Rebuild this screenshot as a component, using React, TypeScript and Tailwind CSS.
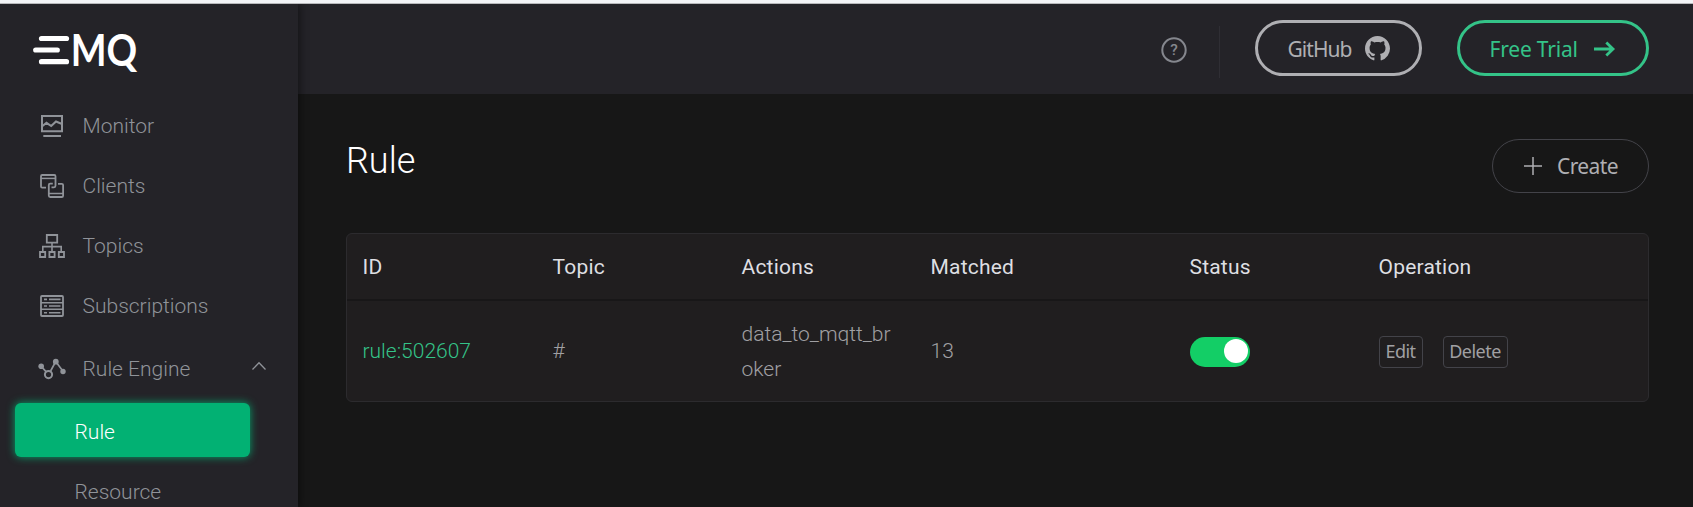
import React from "react";

const ROBOTO = "font-['Roboto',sans-serif]";

function Logo() {
  return (
    <svg className="ml-[32px] mt-[10px] block h-[64px] w-[130px] shrink-0" viewBox="0 -16 130 64" fill="none">
      <g stroke="#fff" strokeWidth="5.2" strokeLinecap="round">
        <path d="M9.5 8.5H34.5" />
        <path d="M3.7 20H25.3" />
        <path d="M9.5 31.7H34.5" />
      </g>
      <text x="38.8" y="35.6" fontSize="43.5" fontWeight="700" fill="#fff" fontFamily="Lato, sans-serif" textLength="66.4" lengthAdjust="spacingAndGlyphs">
        MQ
      </text>
    </svg>
  );
}

function IconBox({ children }: { children: React.ReactNode }) {
  return (
    <svg className="block size-7 shrink-0" viewBox="0 0 28 28" fill="none" stroke="#909399" strokeWidth="1.8">
      {children}
    </svg>
  );
}

const MonitorIcon = () => (
  <IconBox>
    <path d="M4 4H24V19.2H4Z" strokeWidth="2" />
    <path d="M4.5 14L8.500 10.800L13.200 14L18 9.500L24 12" strokeWidth="2.100" />
    <path d="M5.300 24H23" strokeWidth="2" />
  </IconBox>
);

const ClientsIcon = () => (
  <IconBox>
    <path d="M8 15.6H4.2Q3 15.6 3 14.4V4.2Q3 3 4.2 3H16.300Q17.500 3 17.500 4.200V13.800Q17.500 15.300 16 15.300H13.500" />
    <path d="M3 6.400H17.500" strokeWidth="1.500" />
    <path d="M14.800 11.700H12.200Q10.800 11.700 10.800 13V23.600Q10.800 25 12.200 25H23.800Q25.100 25 25.100 23.700V13Q25.100 11.800 23.800 11.800H20" />
    <path d="M10.800 21.500H25" strokeWidth="1.500" />
  </IconBox>
);

const TopicsIcon = () => (
  <IconBox>
    <path d="M8.800 3H19.200V10.600H8.800Z" />
    <path d="M14 10.600V20M4.800 20V14.600H23.200V20" strokeWidth="1.600" />
    <path d="M2 20H7.200V25H2ZM11.400 20H16.600V25H11.400ZM20.800 20H26V25H20.800Z" />
  </IconBox>
);

const SubscriptionsIcon = () => (
  <IconBox>
    <rect x="3" y="4" width="22" height="20" rx="1" />
    <path d="M3 10.700H25M3 17.300H25" strokeWidth="1.500" />
    <path d="M6 7.400H9M11 7.400H22.500M6 14H9M11 14H22.500M6 20.700H9M11 20.700H22.500" strokeWidth="1.600" />
  </IconBox>
);

const RuleEngineIcon = () => (
  <IconBox>
    <path d="M3.200 11.300L8 16.600M12.600 16L17.700 6.500L25.200 16.500" strokeWidth="1.700" />
    <circle cx="10.500" cy="19.600" r="3.600" strokeWidth="2" />
    <g fill="#909399" stroke="none">
      <circle cx="3.200" cy="11.300" r="2.800" />
      <circle cx="17.800" cy="6.700" r="2.900" />
      <circle cx="25" cy="16.500" r="2.700" />
    </g>
  </IconBox>
);

function NavItem({ icon, label, children }: { icon: React.ReactNode; label: string; children?: React.ReactNode }) {
  return (
    <div className="flex h-[60px] shrink-0 items-center pl-[38px] pr-[30px]">
      {icon}
      <span className="ml-[16.500px] flex-1 pt-[2px] text-[21px] font-light text-[#909399]">{label}</span>
      {children}
    </div>
  );
}

function Sidebar() {
  return (
    <aside className="z-10 flex w-[298px] shrink-0 flex-col overflow-hidden bg-[#242328] shadow-[2px_0_8px_rgba(0,0,0,0.45)]">
      <Logo />
      <nav className="mt-[18px] flex flex-col">
        <NavItem icon={<MonitorIcon />} label="Monitor" />
        <NavItem icon={<ClientsIcon />} label="Clients" />
        <NavItem icon={<TopicsIcon />} label="Topics" />
        <NavItem icon={<SubscriptionsIcon />} label="Subscriptions" />
        <div className="h-[3px]" />
        <NavItem icon={<RuleEngineIcon />} label="Rule Engine">
          <svg className="-mt-1.5 block h-[10px] w-[18px]" viewBox="0 0 18 10" fill="none" stroke="#909399" strokeWidth="1.3">
            <path d="M2.500 8.500L9 1.800L15.500 8.500" />
          </svg>
        </NavItem>
        <div className="ml-[15px] mt-1 flex h-[54px] w-[235px] items-center rounded-md bg-[#02b173] pl-[59.500px] pt-[5px] text-[21px] font-light text-white shadow-[0_0_8px_rgba(2,177,115,0.9)]">
          Rule
        </div>
        <div className="mt-[6px] flex h-[60px] shrink-0 items-center pl-[74.500px] text-[21px] font-light text-[#909399]">Resource</div>
      </nav>
    </aside>
  );
}

function Header() {
  return (
    <header className="flex h-[90px] shrink-0 items-start bg-[#242328] pr-[44px]">
      <div className="ml-auto flex items-start">
        <svg className="mt-[32px] block size-[28px]" viewBox="0 0 28 28">
          <circle cx="14" cy="14" r="11.700" fill="none" stroke="#85878e" strokeWidth="2" />
          <text x="14" y="19.300" fontSize="15.500" fontWeight="500" textAnchor="middle" fill="#85878e" fontFamily="Roboto, sans-serif">
            ?
          </text>
        </svg>
        <div className="ml-[31px] mt-[22px] h-[52px] w-px bg-[#2f2e34]" />
        <button className="ml-[35px] mt-4 flex h-14 w-[167px] items-center rounded-full border-[3px] border-[#afafb3] pl-[29.500px] font-['Noto_Sans',sans-serif] text-[21px] text-[#afafb3]">
          <span className="w-[62px] shrink-0 whitespace-nowrap pt-[3px] text-left tracking-[-0.950px]">GitHub</span>
          <svg className="ml-[15px] block size-[25px] shrink-0" viewBox="0 0 16 16" fill="#afafb3">
            <path d="M8 0C3.580 0 0 3.580 0 8c0 3.540 2.290 6.530 5.470 7.590.4.070.55-.17.55-.38 0-.19-.01-.82-.01-1.490-2.010.37-2.530-.49-2.690-.94-.09-.23-.48-.94-.82-1.130-.28-.15-.68-.52-.01-.53.63-.01 1.080.58 1.230.82.72 1.210 1.870.87 2.330.66.07-.52.28-.87.51-1.070-1.780-.2-3.640-.89-3.640-3.950 0-.87.31-1.590.82-2.150-.08-.2-.36-1.020.08-2.120 0 0 .67-.21 2.200.82.64-.18 1.320-.27 2-.27s1.360.09 2 .27c1.530-1.040 2.200-.82 2.200-.82.44 1.100.16 1.920.08 2.120.51.56.82 1.270.82 2.150 0 3.070-1.870 3.750-3.650 3.950.29.25.54.73.54 1.480 0 1.070-.01 1.930-.01 2.200 0 .21.15.46.55.38A8.010 8.010 0 0 0 16 8c0-4.420-3.580-8-8-8z" />
          </svg>
        </button>
        <button className="ml-[35px] mt-4 flex h-14 w-[192px] items-center rounded-full border-[3px] border-[#34c388] pl-[29.500px] font-['Noto_Sans',sans-serif] text-[21px] text-[#34c388]">
          <span className="w-[88px] shrink-0 whitespace-nowrap pt-[3px] text-left tracking-[-0.200px]">Free Trial</span>
          <svg className="ml-[15px] mt-[2px] block h-4 w-6 shrink-0" viewBox="0 0 24 16" fill="none" stroke="#34c388" strokeWidth="2.800">
            <path d="M1 8H20.500M13.300 1.600L20 8L13.300 14.400" />
          </svg>
        </button>
      </div>
    </header>
  );
}

const COLUMNS = "grid grid-cols-[190px_189px_189px_259px_189px_1fr] pl-[15.500px]";

function RuleTable() {
  return (
    <div className="mt-[40px] h-[169px] overflow-hidden rounded-[6px] border border-[#2c2b2e] bg-[#201e1f]">
      <div className={COLUMNS + " h-[67px] items-center border-b-2 border-[#181718] pt-[2px] text-[21px] tracking-[0.200px] text-[#dedfe2]"}>
        <span>ID</span>
        <span>Topic</span>
        <span>Actions</span>
        <span>Matched</span>
        <span>Status</span>
        <span>Operation</span>
      </div>
      <div className={COLUMNS + " h-[100px] items-center pt-px text-[21px] font-light text-[#a0a0a3]"}>
        <span className="text-[#34c388]">rule:502607</span>
        <span>#</span>
        <span className="w-[152px] break-all leading-[35px]">data_to_mqtt_broker</span>
        <span>13</span>
        <div className="mt-px flex h-[30px] w-[60px] justify-end rounded-full bg-[#13ce66] pr-[2px] pt-[2px]">
          <div className="size-6 rounded-full bg-white" />
        </div>
        <div className="flex gap-5 font-['Noto_Sans',sans-serif] text-[18px] font-normal tracking-[-0.500px]">
          <button className="h-8 w-[44px] rounded-[4px] border border-[#434349]">Edit</button>
          <button className="h-8 w-[65px] rounded-[4px] border border-[#434349]">Delete</button>
        </div>
      </div>
    </div>
  );
}

export default function App() {
  return (
    <div className={ROBOTO + " flex h-[507px] w-[1693px] flex-col overflow-hidden bg-[#171717]"}>
      <div className="z-20 h-1 shrink-0 border-b border-[#b9b9bc] bg-[#f3f4f7]" />
      <div className="flex min-h-0 flex-1">
        <Sidebar />
        <div className="flex min-w-0 flex-1 flex-col">
          <Header />
          <main className="flex flex-col pl-12 pr-[44px] pt-[45px]">
            <div className="flex items-start justify-between">
              <h1 className="text-[36px] font-light leading-[44px] text-white">Rule</h1>
              <button className="flex h-[54px] w-[157px] items-center rounded-full border border-[#434349] pl-[30px] font-['Noto_Sans',sans-serif] text-[21px] text-[#afafb3]">
                <svg className="block size-5" viewBox="0 0 20 20" stroke="#afafb3" strokeWidth="1.500">
                  <path d="M1 10H19M10 1V19" />
                </svg>
                <span className="ml-[14px] pt-[2px] tracking-[-0.600px]">Create</span>
              </button>
            </div>
            <RuleTable />
          </main>
        </div>
      </div>
    </div>
  );
}
